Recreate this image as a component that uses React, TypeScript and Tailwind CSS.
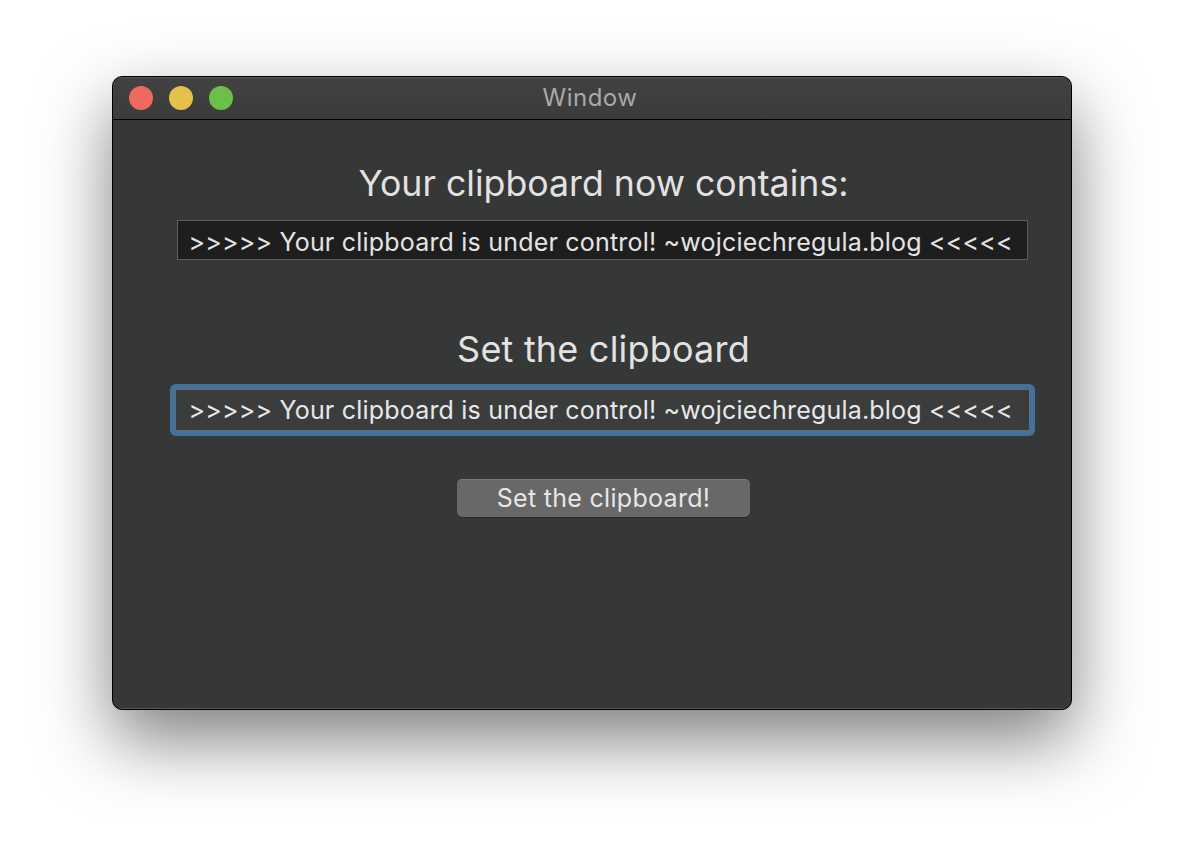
import React from "react";

export default function App() {
  const font = { fontFamily: 'Inter, "Noto Sans", sans-serif' };
  const text = ">>>>> Your clipboard is under control! ~wojciechregula.blog <<<<<";
  return (
    <div className="w-[1184px] h-[858px] bg-white pt-[76px] px-[112px]" style={font}>
      <div className="w-[960px] h-[634px] flex flex-col rounded-[10px] border border-black bg-[#363737] shadow-[0_30px_70px_rgba(0,0,0,0.5)] overflow-hidden">
        <div className="relative h-[43px] flex items-center bg-gradient-to-b from-[#424242] to-[#3b3b3b] border-b border-black shrink-0 shadow-[inset_0_1px_0_rgba(255,255,255,0.12)]">
          <div className="flex gap-[16px] pl-[16px]">
            <div className="w-[24px] h-[24px] rounded-full bg-[#ee6a5f]" />
            <div className="w-[24px] h-[24px] rounded-full bg-[#e3c14b]" />
            <div className="w-[24px] h-[24px] rounded-full bg-[#6cbf48]" />
          </div>
          <div className="absolute inset-0 flex items-center justify-center text-[24px] tracking-[0.5px] text-[#a9a9a9] pr-[4px]">
            Window
          </div>
        </div>
        <div className="flex-1 flex flex-col items-center pl-[20px] pt-[42px] shadow-[inset_0_-1px_0_rgba(255,255,255,0.18)]">
          <div className="ml-[3px] text-[35.7px] leading-[42px] text-[#e2e2e2]">Your clipboard now contains:</div>
          <div className="mt-[16px] w-[851px] h-[40px] bg-[#1e1e1e] border border-[#5c5d5d] flex items-center pl-[11px] pt-[5px] text-[25px] tracking-[0.2px] text-[#e4e4e4] whitespace-nowrap overflow-hidden">
            {text}
          </div>
          <div className="ml-[3px] mt-[68px] text-[36px] leading-[42px] text-[#e2e2e2] tracking-[0.2px]">Set the clipboard</div>
          <div className="mt-[14px] w-[865px] h-[52px] rounded-[6px] bg-[#43719d] p-[5px]">
            <div className="w-full h-full bg-[#3b3c3c] border border-[#6a6b6b] flex items-center pl-[13px] pt-[2px] text-[25px] tracking-[0.2px] text-[#e8e8e8] whitespace-nowrap overflow-hidden">
              {text}
            </div>
          </div>
          <button className="ml-[3px] mt-[43px] w-[293px] h-[38px] rounded-[5px] bg-[#676867] border-t border-[#787878] text-[25px] tracking-[0.3px] text-[#e6e6e6] flex items-center justify-center shadow-[0_1px_1px_rgba(0,0,0,0.3)]">
            Set the clipboard!
          </button>
        </div>
      </div>
    </div>
  );
}
